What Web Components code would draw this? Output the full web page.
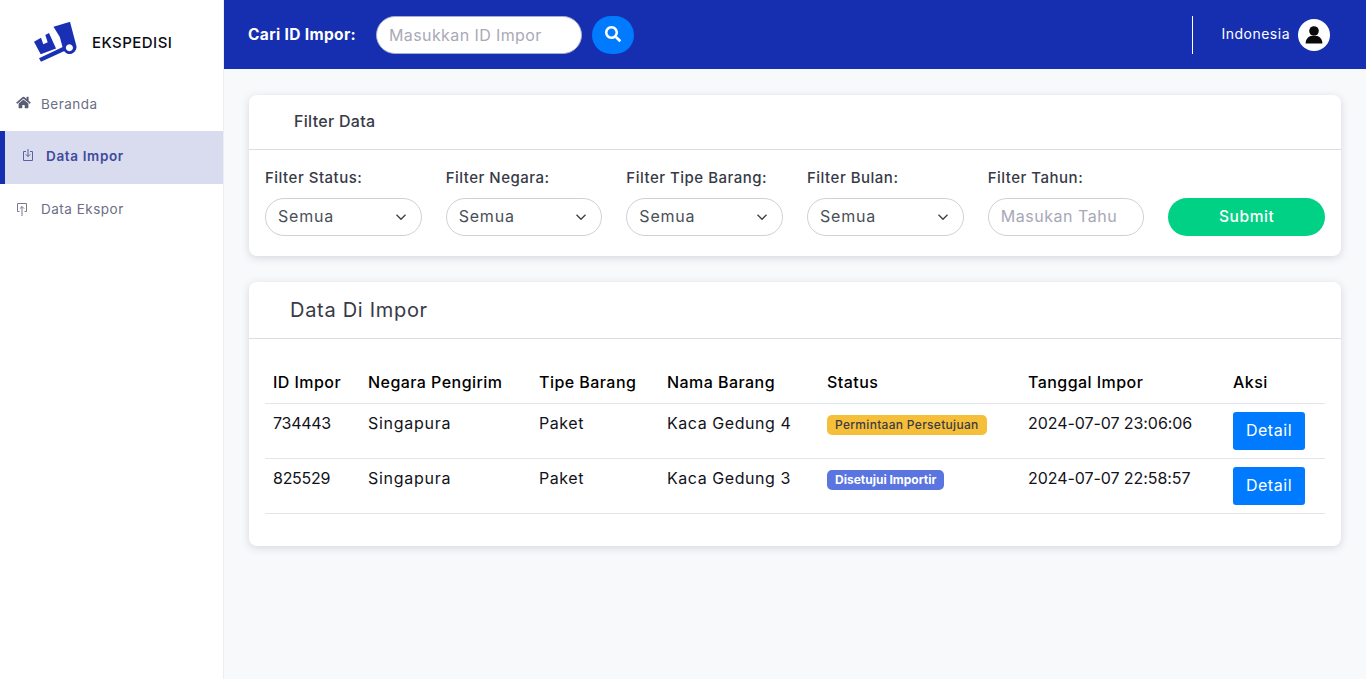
<!DOCTYPE html>
<html lang="id">
<head>
<meta charset="utf-8">
<title>Ekspedisi</title>
<style>
  html, body { margin: 0; height: 100%; }
  body {
    background: #f8f9fb;
    font-family: Inter, "Liberation Sans", sans-serif;
    display: grid;
    grid-template-columns: 224px 1fr;
    min-height: 679px;
  }
  main-content { min-width: 0; }
</style>
</head>
<body>
  <app-sidebar>
    <side-link label="Beranda" icon="home"></side-link>
    <side-link label="Data Impor" icon="import" active></side-link>
    <side-link label="Data Ekspor" icon="export"></side-link>
  </app-sidebar>

  <main-content>
    <top-bar></top-bar>
    <div style="padding: 26px 25px 0; display: flex; flex-direction: column; gap: 26px;">
      <panel-card heading="Filter Data" kind="small">
        <filter-form></filter-form>
      </panel-card>
      <panel-card heading="Data Di Impor" kind="large">
        <impor-table state='[
          {"id":"734443","negara":"Singapura","tipe":"Paket","nama":"Kaca Gedung 4","status":"Permintaan Persetujuan","tone":"warning","tanggal":"2024-07-07 23:06:06"},
          {"id":"825529","negara":"Singapura","tipe":"Paket","nama":"Kaca Gedung 3","status":"Disetujui Importir","tone":"primary","tanggal":"2024-07-07 22:58:57"}
        ]'></impor-table>
      </panel-card>
    </div>
  </main-content>

<script>
const ICONS = {
  home: `<svg class="up" width="15" height="13" viewBox="0 0 576 512" fill="#5a5c75"><path d="M280.37 148.26L96 300.11V464a16 16 0 0 0 16 16l112.06-.29a16 16 0 0 0 15.92-16V368a16 16 0 0 1 16-16h64a16 16 0 0 1 16 16v95.64a16 16 0 0 0 16 16.05L464 480a16 16 0 0 0 16-16V300L295.67 148.26a12.19 12.19 0 0 0-15.3 0zM571.6 251.47L488 182.56V44.05a12 12 0 0 0-12-12h-56a12 12 0 0 0-12 12v72.61L318.47 43a48 48 0 0 0-61 0L4.34 251.47a12 12 0 0 0-1.6 16.9l25.5 31A12 12 0 0 0 45.15 301l235.22-193.74a12.19 12.19 0 0 1 15.3 0L530.9 301a12 12 0 0 0 16.9-1.6l25.5-31a12 12 0 0 0-1.7-16.93z"/></svg>`,
  import: `<svg class="up" width="12" height="12" viewBox="0 0 12 12" fill="none" stroke="#5a60a3" stroke-width="1"><path d="M4 2.500H1.500v9h9v-9H8"/><path d="M6 0v7.500M3.800 5.300 6 7.500 8.200 5.300"/></svg>`,
  export: `<svg width="12" height="13" viewBox="0 0 12 13" fill="none" stroke="#777a90" stroke-width="1"><path d="M3.500 8.500H1.500v-8h9v8H8.500"/><path d="M6 13V3.500M3.800 5.700 6 3.500 8.200 5.700"/></svg>`,
  search: `<svg width="16" height="16" viewBox="0 0 512 512" fill="#fff"><path d="M505 442.7L405.3 343c-4.5-4.5-10.6-7-17-7H372c27.6-35.3 44-79.7 44-128C416 93.1 322.9 0 208 0S0 93.1 0 208s93.1 208 208 208c48.3 0 92.7-16.4 128-44v16.3c0 6.4 2.5 12.5 7 17l99.7 99.7c9.4 9.4 24.6 9.4 33.9 0l28.3-28.3c9.4-9.4 9.4-24.6.1-34zM208 336c-70.7 0-128-57.2-128-128 0-70.7 57.2-128 128-128 70.7 0 128 57.2 128 128 0 70.7-57.2 128-128 128z"/></svg>`,
};

class AppSidebar extends HTMLElement {
  constructor() {
    super();
    const shadowRoot = this.attachShadow({ mode: 'open' });
    shadowRoot.innerHTML = `
      <style>
        :host { display: block; background: #fff; border-right: 1px solid #eceef3; box-sizing: border-box; }
        .brand { height: 78px; display: flex; align-items: center; padding-left: 34px; gap: 15px; padding-top: 6px; box-sizing: border-box; }
        .brand span { font: 500 15px Inter, sans-serif; letter-spacing: .45px; color: #0b0b14; }
        nav { display: flex; flex-direction: column; }
      </style>
      <div class="brand">
        <svg width="43" height="41" viewBox="34 22 43 41" fill="#1a30b4">
          <path fill-rule="evenodd" d="M53.500 26.800 70 21.800 76 44.500A6.800 6.800 0 0 1 63.200 49.600L59.800 37ZM69.400 44.200a3.500 3.500 0 1 0 .01 0Z"/>
          <path d="M34 41.700 41 37.700 43.300 44.300 47.700 42.300 45.300 35 49 33 56 48.500 40.700 54.300Z"/>
          <path d="M39 58.300 63.300 46.700 65 50.700 41 61.700Z"/>
        </svg>
        <span>EKSPEDISI</span>
      </div>
      <nav><slot></slot></nav>
    `;
  }
}

class SideLink extends HTMLElement {
  constructor() {
    super();
    const shadowRoot = this.attachShadow({ mode: 'open' });
    const active = this.hasAttribute('active');
    const home = this.getAttribute('icon') === 'home';
    shadowRoot.innerHTML = `
      <style>
        :host { display: block; }
        a {
          height: 53px; display: flex; align-items: center; box-sizing: border-box;
          padding: 0 0 ${home ? '1px' : '3px'} 16px; gap: ${home ? '10px' : '13px'};
          color: #6c6e86; font-size: 13.5px; letter-spacing: .5px; text-decoration: none;
        }
        a.active {
          background: #d9dcee; border-left: 5px solid #152fb0; padding-left: 17px;
          color: #3f4a9c; font-weight: 600; letter-spacing: .65px; gap: 12px;
        }
        svg { display: block; flex: none; }
        svg.up { margin-bottom: 3px; }
      </style>
      <a href="#" class="${active ? 'active' : ''}">${ICONS[this.getAttribute('icon')]}<span>${this.getAttribute('label')}</span></a>
    `;
  }
}

class TopBar extends HTMLElement {
  constructor() {
    super();
    const shadowRoot = this.attachShadow({ mode: 'open' });
    shadowRoot.innerHTML = `
      <style>
        :host {
          display: flex; align-items: center; height: 69px; background: #152fb0; color: #fff;
          padding: 0 36px 0 24px; box-sizing: border-box;
        }
        label { font-weight: 700; font-size: 15.5px; letter-spacing: .35px; width: 128px; flex: none; white-space: nowrap; }
        input {
          width: 206px; height: 38px; box-sizing: border-box; border: 1px solid #a8aed0; border-radius: 19px;
          padding: 0 12px; font: 400 16px Inter, sans-serif; letter-spacing: .4px; outline: none;
        }
        input::placeholder { color: #a9a9b8; opacity: 1; }
        button {
          width: 42px; height: 38px; margin-left: 10px; border: 0; border-radius: 19px; background: #007bff;
          display: grid; place-items: center; padding: 0 0 2px;
        }
        .right { margin-left: auto; display: flex; align-items: center; height: 38px; border-left: 1px solid #fff; padding-left: 28px; gap: 8px; font-size: 14px; letter-spacing: .5px; }
        .right span { padding-bottom: 2px; }
        .avatar { width: 32px; height: 32px; display: block; }
      </style>
      <label>Cari ID Impor:</label>
      <input type="text" placeholder="Masukkan ID Impor">
      <button type="button">${ICONS.search}</button>
      <div class="right">
        <span>Indonesia</span>
        <svg class="avatar" viewBox="0 0 32 32">
          <circle cx="16" cy="16" r="16" fill="#fff"/>
          <circle cx="16" cy="12" r="4.800" fill="#0a0a0a"/>
          <path d="M7.600 24.500c0-5 3.400-7.500 6-7.500h4.800c2.600 0 6 2.500 6 7.500Z" fill="#0a0a0a"/>
        </svg>
      </div>
    `;
  }
}

class PanelCard extends HTMLElement {
  constructor() {
    super();
    const shadowRoot = this.attachShadow({ mode: 'open' });
    const large = this.getAttribute('kind') === 'large';
    shadowRoot.innerHTML = `
      <style>
        :host {
          display: block; background: #fff; border-radius: 8px;
          box-shadow: 0 2px 8px rgba(60, 66, 90, .18);
        }
        header {
          box-sizing: border-box; border-bottom: 1px solid #dcdee3; display: flex; align-items: center;
          height: ${large ? '57px' : '55px'}; padding: 0 0 ${large ? '0' : '2px'} ${large ? '41px' : '45px'};
          color: #373a47; font-size: ${large ? '20px' : '16px'};
          font-weight: ${large ? 400 : 500}; letter-spacing: ${large ? '.7px' : '.3px'};
        }
      </style>
      <header>${this.getAttribute('heading')}</header>
      <slot></slot>
    `;
  }
}

class FilterField extends HTMLElement {
  constructor() {
    super();
    const shadowRoot = this.attachShadow({ mode: 'open' });
    shadowRoot.innerHTML = `
      <style>
        :host { display: flex; flex-direction: column; gap: 10px; min-width: 0; }
        label { color: #373a47; font-size: 15px; font-weight: 500; line-height: 20px; white-space: nowrap; letter-spacing: .5px; }
      </style>
      <label>${this.getAttribute('label')}</label>
      <slot></slot>
    `;
  }
}

class FilterForm extends HTMLElement {
  constructor() {
    super();
    const shadowRoot = this.attachShadow({ mode: 'open' });
    const chevron = "url(\"data:image/svg+xml,%3Csvg xmlns='http://www.w3.org/2000/svg' width='12' height='8' viewBox='0 0 12 8'%3E%3Cpath d='M1.500 1.800 6 6.200 10.500 1.800' fill='none' stroke='%23444' stroke-width='1.400'/%3E%3C/svg%3E\")";
    const select = (name) => `<select name="${name}"><option>Semua</option></select>`;
    shadowRoot.innerHTML = `
      <style>
        :host {
          display: grid; grid-template-columns: repeat(6, minmax(0, 1fr)); column-gap: 24px;
          padding: 18px 16px 20px; align-items: end;
        }
        select, input, button {
          width: 100%; height: 38px; box-sizing: border-box; border-radius: 19px;
          font: 400 16px Inter, sans-serif; letter-spacing: .8px; outline: none; margin: 0;
        }
        select, input { border: 1px solid #ced1d9; background-color: #fff; color: #495057; padding: 0 12px 2px; }
        select { appearance: none; background: #fff ${chevron} no-repeat right 14px top 14px; }
        input { letter-spacing: .55px; }
        input::placeholder { color: #a7a8b6; opacity: 1; }
        button { border: 0; background: #00d184; color: #fff; font-weight: 500; font-size: 15.5px; letter-spacing: .6px; padding: 0 0 2px; }
      </style>
      <filter-field label="Filter Status:">${select('status')}</filter-field>
      <filter-field label="Filter Negara:">${select('negara')}</filter-field>
      <filter-field label="Filter Tipe Barang:">${select('tipe')}</filter-field>
      <filter-field label="Filter Bulan:">${select('bulan')}</filter-field>
      <filter-field label="Filter Tahun:"><input type="text" placeholder="Masukan Tahu"></filter-field>
      <button type="button">Submit</button>
    `;
  }
}

class StatusBadge extends HTMLElement {
  constructor() {
    super();
    const shadowRoot = this.attachShadow({ mode: 'open' });
    const warning = this.getAttribute('tone') === 'warning';
    shadowRoot.innerHTML = `
      <style>
        :host {
          display: inline-block; height: 20px; line-height: 20px; padding: 0 8px; border-radius: 5px; white-space: nowrap;
          font-size: 12px; background: ${warning ? '#f6bf3a' : '#5a75e0'}; color: ${warning ? '#3c3c44' : '#fff'};
          font-weight: ${warning ? 500 : 700}; letter-spacing: ${warning ? '.3px' : '0'};
        }
      </style>
      <slot></slot>
    `;
  }
}

class ImporTable extends HTMLElement {
  constructor() {
    super();
    const shadowRoot = this.attachShadow({ mode: 'open' });
    shadowRoot.innerHTML = `
      <style>
        :host { display: block; padding: 21px 16px 32px; }
        table { width: 100%; border-collapse: collapse; table-layout: fixed; color: #12121a; font-size: 16px; letter-spacing: .55px; }
        th { text-align: left; font-weight: 500; color: #000; padding: 0 8px; height: 43px; vertical-align: middle; letter-spacing: .45px; }
        tr { border-bottom: 1px solid #e3e4ec; }
        td { height: 55px; box-sizing: border-box; padding: 8px 8px 0; vertical-align: top; line-height: 22px; white-space: nowrap; }
        td.id { letter-spacing: -.27px; }
        td.date { letter-spacing: -.07px; }
        td.country { letter-spacing: .73px; }
        button {
          width: 72px; height: 38px; border: 0; border-radius: 3px; background: #007bff; color: #fff;
          font: 400 16px Inter, sans-serif; letter-spacing: .55px; display: block; padding: 0 0 2px;
        }
      </style>
      <table>
        <colgroup><col style="width:95px"><col style="width:171px"><col style="width:128px"><col style="width:160px"><col style="width:201px"><col style="width:205px"><col></colgroup>
        <thead><tr><th>ID Impor</th><th>Negara Pengirim</th><th>Tipe Barang</th><th>Nama Barang</th><th>Status</th><th>Tanggal Impor</th><th>Aksi</th></tr></thead>
        <tbody></tbody>
      </table>
    `;
  }

  static get observedAttributes() {
    return ['state'];
  }

  attributeChangedCallback(name, oldValue, newValue) {
    const rows = newValue ? JSON.parse(newValue) : [];
    this.shadowRoot.querySelector('tbody').innerHTML = rows.map((row) => `
      <tr>
        <td class="id">${row.id}</td><td class="country">${row.negara}</td><td>${row.tipe}</td><td>${row.nama}</td>
        <td><status-badge tone="${row.tone}">${row.status}</status-badge></td>
        <td class="date">${row.tanggal}</td>
        <td><button type="button">Detail</button></td>
      </tr>
    `).join('');
  }
}

window.customElements.define('side-link', SideLink);
window.customElements.define('app-sidebar', AppSidebar);
window.customElements.define('top-bar', TopBar);
window.customElements.define('panel-card', PanelCard);
window.customElements.define('filter-field', FilterField);
window.customElements.define('filter-form', FilterForm);
window.customElements.define('status-badge', StatusBadge);
window.customElements.define('impor-table', ImporTable);
</script>
</body>
</html>
